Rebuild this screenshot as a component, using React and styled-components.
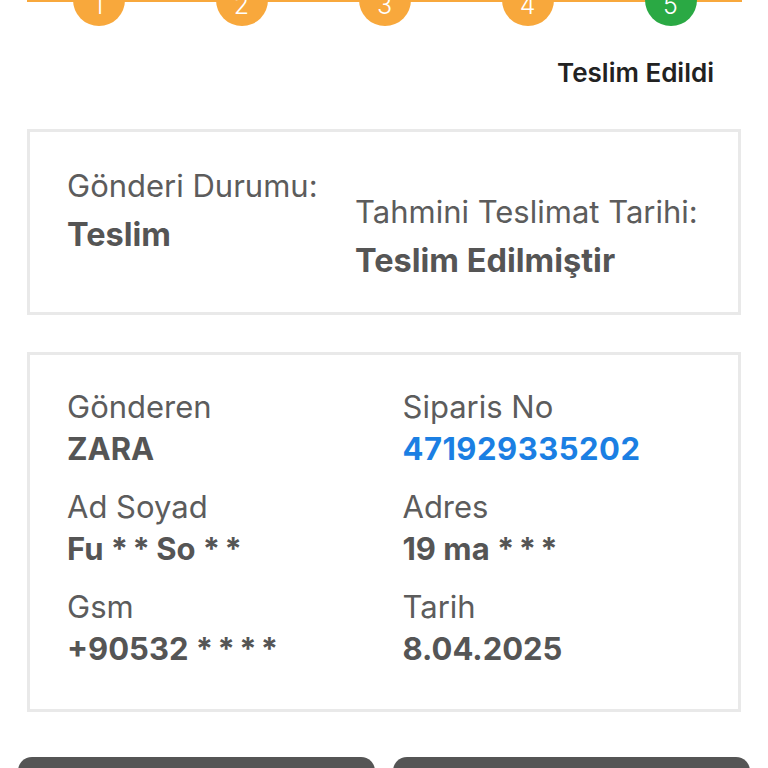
import React from "react";
import styled, { createGlobalStyle } from "styled-components";

const Global = createGlobalStyle`
  html, body { margin: 0; padding: 0; background: #fff; }
  body { font-family: Inter, "Noto Sans", Roboto, sans-serif; overflow: hidden; }
  * { box-sizing: border-box; }
`;

const Page = styled.div`
  width: 768px;
  display: flex;
  flex-direction: column;
`;

const Stepper = styled.div`
  position: relative;
  margin: -26px 26px 0 27px;
  display: grid;
  grid-template-columns: repeat(5, 1fr);
  &::before {
    content: "";
    position: absolute;
    left: 0;
    right: 0;
    top: 25px;
    height: 3px;
    background: #f8a83c;
  }
`;

const StepCell = styled.div`
  display: flex;
  justify-content: center;
  position: relative;
`;

const Circle = styled.div`
  width: 52px;
  height: 52px;
  border-radius: 50%;
  background: ${(p) => (p.$done ? "#2aa944" : "#f8a83c")};
  color: #fff;
  font-weight: 300;
  font-size: 25px;
  display: flex;
  align-items: center;
  justify-content: center;
  padding-top: 10px;
`;

const Heading = styled.div`
  align-self: flex-end;
  margin: 32px 54px 0 0;
  font-size: 26px;
  line-height: 30px;
  font-weight: 600;
  color: #222;
`;

const Card = styled.div`
  margin: ${(p) => p.$mt}px 27px 0 27px;
  border: 3px solid #e9e9e9;
  background: #fff;
`;

const StatusCard = styled(Card)`
  display: grid;
  grid-template-columns: 288px 1fr;
  padding: 32px 0 24px 37px;
`;

const StatusCol = styled.div`
  display: flex;
  flex-direction: column;
  margin-top: ${(p) => p.$offset || 0}px;
`;

const Label = styled.div`
  font-size: 31px;
  font-weight: 400;
  color: #5c5c5c;
  line-height: ${(p) => p.$lh || 42}px;
  white-space: nowrap;
`;

const Value = styled.div`
  font-size: ${(p) => p.$size || 31}px;
  font-weight: 700;
  color: ${(p) => (p.$link ? "#1b7fe3" : "#555")};
  line-height: ${(p) => p.$lh || 42}px;
  white-space: nowrap;
  letter-spacing: ${(p) => (p.$link ? "0.5px" : "0")};
`;

const Mask = styled.span`
  letter-spacing: -1px;
  word-spacing: -1px;
`;

const InfoCard = styled(Card)`
  display: grid;
  grid-template-columns: 1fr 1fr;
  row-gap: 16px;
  padding: 31px 0 39px 37px;
`;

const Field = styled.div`
  display: flex;
  flex-direction: column;
`;

const Buttons = styled.div`
  margin: 45px 18px 0 18px;
  display: grid;
  grid-template-columns: 1fr 1fr;
  gap: 18px;
`;

const Button = styled.div`
  height: 60px;
  background: #555;
  border-radius: 14px 14px 0 0;
`;

const fields = [
  ["Gönderen", "ZARA"],
  ["Siparis No", "471929335202", true],
  ["Ad Soyad", <>Fu <Mask>* *</Mask> So <Mask>* *</Mask></>],
  ["Adres", <>19 ma <Mask>* * *</Mask></>],
  ["Gsm", <>+90532 <Mask>* * * *</Mask></>],
  ["Tarih", "8.04.2025"],
];

export default function App() {
  return (
    <Page>
      <Global />
      <Stepper>
        {[1, 2, 3, 4, 5].map((n) => (
          <StepCell key={n}>
            <Circle $done={n === 5}>{n}</Circle>
          </StepCell>
        ))}
      </Stepper>
      <Heading>Teslim Edildi</Heading>
      <StatusCard $mt={41}>
        <StatusCol>
          <Label $lh={44}>Gönderi Durumu:</Label>
          <Value $lh={54} $size={32.5}>Teslim</Value>
        </StatusCol>
        <StatusCol $offset={26}>
          <Label $lh={44}>Tahmini Teslimat Tarihi:</Label>
          <Value $lh={54} $size={32.5}>Teslim Edilmiştir</Value>
        </StatusCol>
      </StatusCard>
      <InfoCard $mt={37}>
        {fields.map(([l, v, link]) => (
          <Field key={l}>
            <Label>{l}</Label>
            <Value $link={link}>{v}</Value>
          </Field>
        ))}
      </InfoCard>
      <Buttons>
        <Button />
        <Button />
      </Buttons>
    </Page>
  );
}
